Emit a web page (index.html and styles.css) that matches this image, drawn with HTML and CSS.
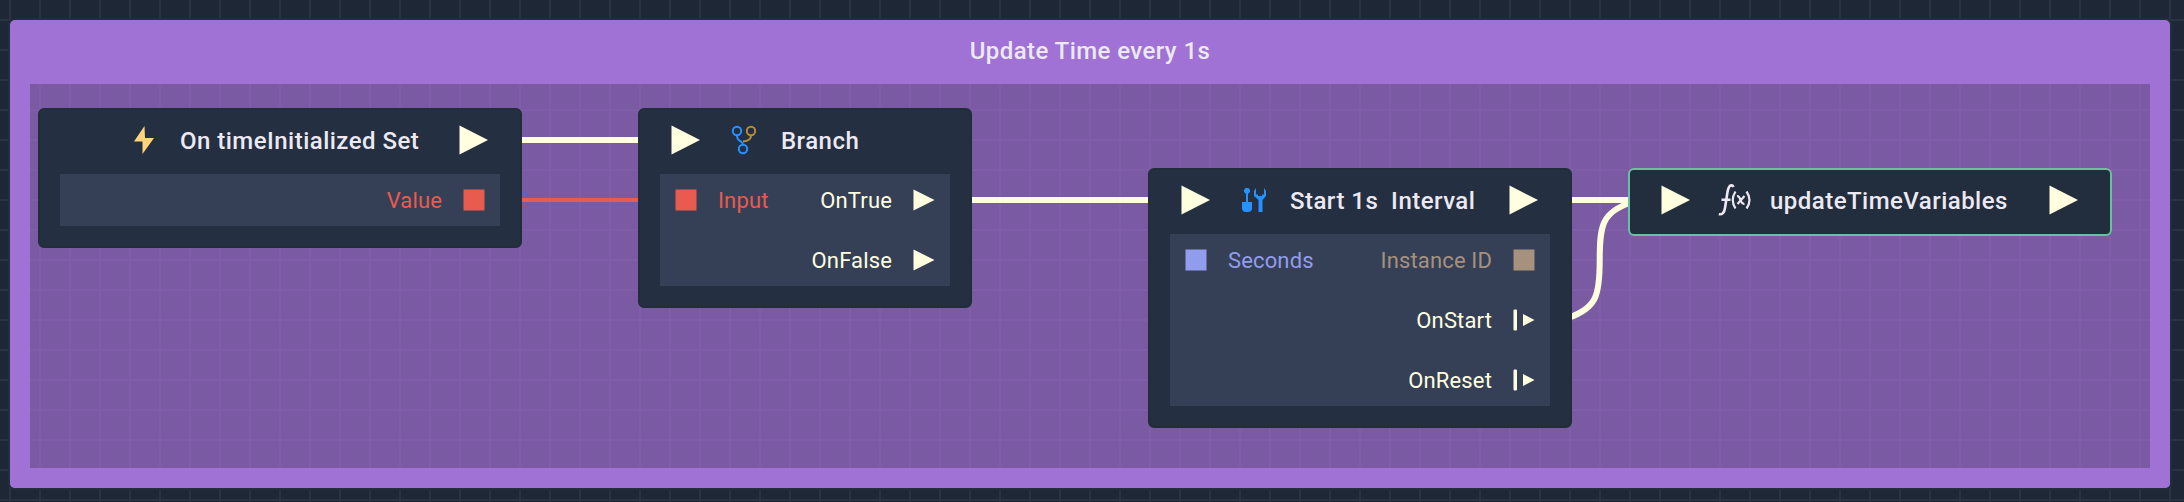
FILE: index.html
```html
<!DOCTYPE html>
<html lang="en">
<head>
<meta charset="utf-8">
<title>Update Time every 1s</title>
<link rel="stylesheet" href="styles.css">
</head>
<body>
<svg class="defs" width="0" height="0">
  <symbol id="flow" viewBox="0 0 30 30"><path d="M.5 .5v29L29 15z"/></symbol>
  <symbol id="flow-sm" viewBox="0 0 22 22"><path d="M.5.5v21L21.5 11z"/></symbol>
  <symbol id="data" viewBox="0 0 22 22"><path d="M.5.5h21v21H.5z"/></symbol>
  <symbol id="event" viewBox="0 0 22 22"><path d="M.5 1.6Q.5.5 1.6.5H3q1 0 1 1.100v18.800q0 1.100-1 1.100H1.600Q.5 21.500.5 20.400zM10 5v12l11.500-6z"/></symbol>
</svg>
<main class="canvas">
  <section class="group">
    <h1 class="group-title">Update Time every 1s</h1>
    <div class="group-body"></div>
  </section>

  <svg class="wires" viewBox="0 0 2184 502">
    <path class="wire flow" d="M522 140H638M972 200H1148M1572 200H1630"/>
    <path class="wire flow" d="M1568 318C1597 308 1599.700 295 1599.700 260C1599.700 225 1602 212 1632 202"/>
    <path class="wire bool" d="M522 200H638"/>
  </svg>

  <article class="node event-node">
    <header class="node-head">
      <svg class="icon bolt" width="20" height="28" viewBox="0 0 20 28"><path d="M10.500 0 0 15.500h8.500L8.500 28 20 12h-9z"/></svg>
      <h2>On timeInitialized Set</h2>
      <svg class="pin out"><use href="#flow"/></svg>
    </header>
    <div class="ports">
      <div class="row"><span class="port right bool">Value<svg><use href="#data"/></svg></span></div>
    </div>
  </article>

  <article class="node branch-node">
    <header class="node-head">
      <svg class="pin"><use href="#flow"/></svg>
      <svg class="icon branch" width="26" height="30" viewBox="0 0 26 30">
        <g class="gold"><circle cx="20" cy="6" r="4.200"/><path d="M20 10.500Q20 16 12 16.500"/></g>
        <circle cx="6" cy="6" r="4.200"/><circle cx="12" cy="24" r="4.200"/><path d="M6 10.500Q6 15 10 16.500 12 18 12 20"/>
      </svg>
      <h2>Branch</h2>
    </header>
    <div class="ports">
      <div class="row"><span class="port bool"><svg><use href="#data"/></svg>Input</span><span class="port right flow">OnTrue<svg><use href="#flow-sm"/></svg></span></div>
      <div class="row"><span class="port right flow">OnFalse<svg><use href="#flow-sm"/></svg></span></div>
    </div>
  </article>

  <article class="node interval-node">
    <header class="node-head">
      <svg class="pin"><use href="#flow"/></svg>
      <svg class="icon tools" width="24" height="24" viewBox="0 0 24 24"><path d="M3.500 0h3L8 2v2L6 6v8h4v6q0 4-4 4H4q-4 0-4-4v-6h4V6L2 4V2zM14 0v6.500h2V8h4V6.500h2V0l2 3v5l-3.500 4v12h-4V12L12 8V3z"/></svg>
      <h2>Start 1s  Interval</h2>
      <svg class="pin out"><use href="#flow"/></svg>
    </header>
    <div class="ports">
      <div class="row"><span class="port number"><svg><use href="#data"/></svg>Seconds</span><span class="port right id">Instance ID<svg><use href="#data"/></svg></span></div>
      <div class="row"><span class="port right flow">OnStart<svg><use href="#event"/></svg></span></div>
      <div class="row"><span class="port right flow">OnReset<svg><use href="#event"/></svg></span></div>
    </div>
  </article>

  <article class="node call-node">
    <header class="node-head">
      <svg class="pin"><use href="#flow"/></svg>
      <svg class="icon fx" width="34" height="32" viewBox="0 0 34 32">
        <path d="M15.500 3Q14.500 .8 12.500 1.500 10.500 2.500 9.500 8L7 24Q6 31 .8 30.200M3.500 15.800h9"/>
        <path class="thin" d="M17.500 7.500Q12 16 17.500 24.500M28.500 7.500Q34.500 16 28.500 24.500"/>
        <path class="thin" d="M19 12.200q2-.5 3.500 3.800t4 3.800M26.500 12l-7 8"/>
      </svg>
      <h2>updateTimeVariables</h2>
      <svg class="pin out"><use href="#flow"/></svg>
    </header>
  </article>
</main>
</body>
</html>
```
FILE: styles.css
```css
* { box-sizing: border-box; }
body { margin: 0; background: #1e2735; font-family: Roboto, "Liberation Sans", sans-serif; }
.defs { position: absolute; }
h1, h2 { margin: 0; font-size: 24px; font-weight: 500; line-height: 32px; letter-spacing: .47px; white-space: pre; color: #ece9f2; }

.canvas {
  position: relative;
  width: 2184px;
  height: 502px;
  padding: 18px 12px 12px 8px;
  overflow: hidden;
  background:
    linear-gradient(90deg, #293442 2px, transparent 2px) 9px 0 / 30px 30px,
    linear-gradient(#293442 2px, transparent 2px) 0 19px / 30px 30px,
    #1e2735;
}

.group {
  display: flex;
  flex-direction: column;
  height: 472px;
  border: 2px solid #222d3d;
  border-radius: 7px;
  background: #222d3d;
}
.group-title {
  height: 64px;
  padding-top: 15px;
  border-radius: 5px 5px 0 0;
  background: #a072d5;
  text-align: center;
  letter-spacing: .42px;
}
.group-body {
  flex: 1;
  border: 20px solid #a072d5;
  border-top: 0;
  border-radius: 0 0 5px 5px;
  background:
    linear-gradient(90deg, #7f5da8 2px, transparent 2px) 9px 0 / 30px 30px,
    linear-gradient(#7f5da8 2px, transparent 2px) 0 25px / 30px 30px,
    #7a5ba3;
}

.wires { position: absolute; left: 0; top: 0; width: 2184px; height: 502px; }
.wire { fill: none; stroke: currentColor; stroke-width: 6; }
.wire.bool { stroke-width: 4; }
.flow { color: #ffffe0; }
.bool { color: #e85b4e; }
.number { color: #929cec; }
.id { color: #a5917e; }

.node {
  position: absolute;
  padding: 0 20px;
  border: 2px solid #222d3c;
  border-radius: 6px;
  background: #242f42;
}
.event-node { left: 38px; top: 108px; width: 484px; height: 140px; }
.branch-node { left: 638px; top: 108px; width: 334px; height: 200px; }
.interval-node { left: 1148px; top: 168px; width: 424px; height: 260px; }
.call-node { left: 1628px; top: 168px; width: 484px; height: 68px; border-color: #6bc0a0; background: #222d3d; }

.node-head { display: flex; align-items: center; height: 60px; padding: 0 11px; }
.node-head h2 { padding-top: 1px; }
.pin { flex: none; width: 30px; height: 30px; fill: #ffffe0; }
.pin.out { margin-left: auto; }
.icon { flex: none; }
.bolt { margin: 0 26px 0 63px; fill: #ffd47c; }
.branch { margin: 0 24px 0 30px; fill: none; stroke: #2492ff; stroke-width: 2; }
.gold { stroke: #b98a3a; }
.tools { margin: 0 24px 0 31px; fill: #2492ff; }
.fx { margin: 0 18px 0 27px; fill: none; stroke: #ece9f2; stroke-width: 2.600; }
.thin { stroke-width: 2.200; }

.ports { display: grid; gap: 38px; margin-top: 4px; padding: 15px; background: #354056; }
.row { display: flex; align-items: center; height: 22px; }
.port { display: flex; align-items: center; gap: 21px; padding-top: 2px; font-size: 22px; line-height: 26px; letter-spacing: .14px; }
.port svg { width: 22px; height: 22px; margin-top: -2px; fill: currentColor; }
.port.right { margin-left: auto; }
```
